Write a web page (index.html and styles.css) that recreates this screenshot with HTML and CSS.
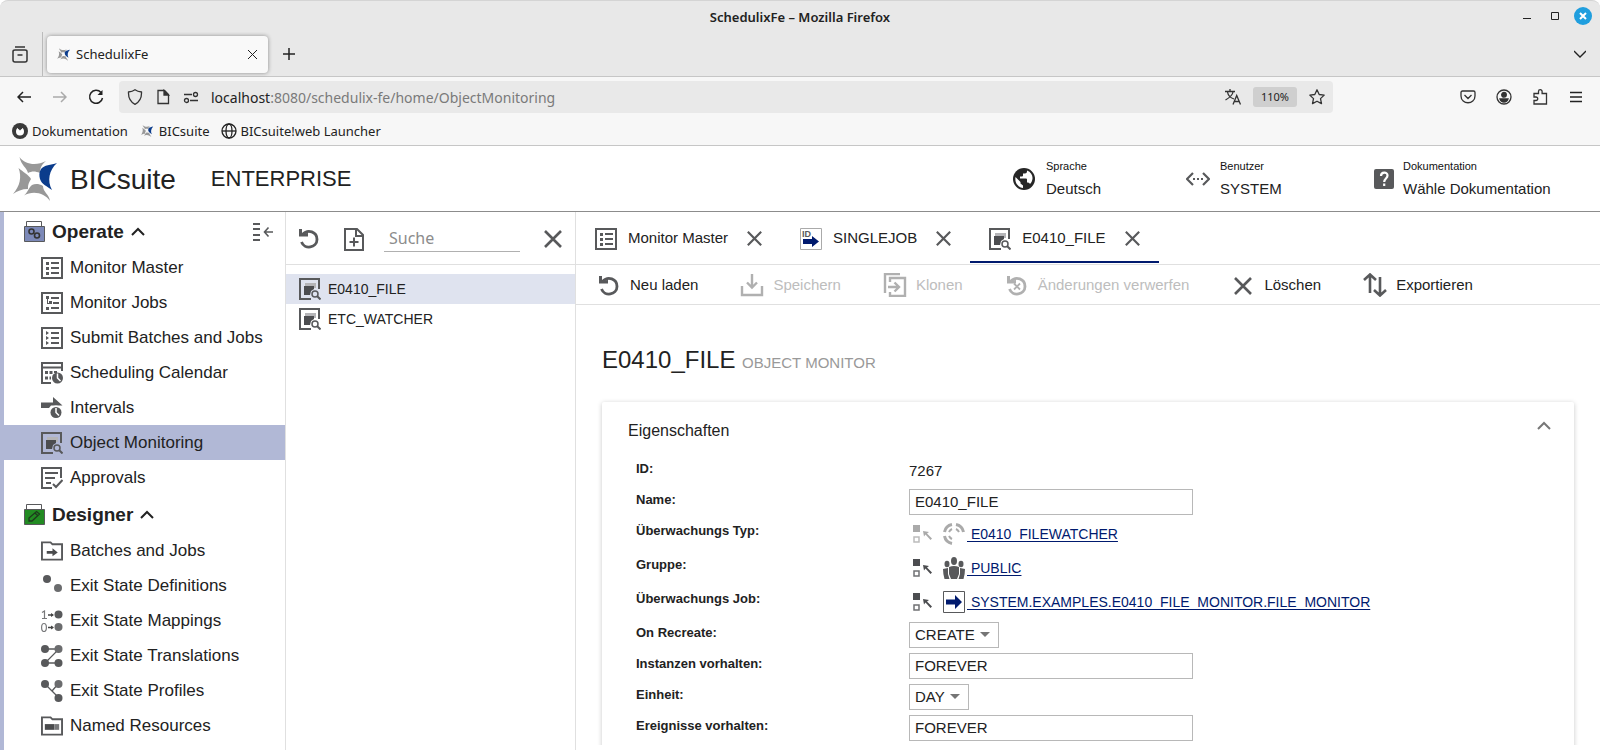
FILE: index.html
```html
<!DOCTYPE html>
<html lang="de">
<head>
  <meta charset="UTF-8" />
  <meta name="viewport" content="width=device-width, initial-scale=1" />
  <title>SchedulixFe</title>
  <link rel="stylesheet" href="styles.css">
</head>
<body>

<!-- shared icons -->
<svg class="defs" aria-hidden="true">
  <symbol id="i-logo" viewBox="0 0 44 44">
    <g fill="#989898">
      <path d="M6.500 0C12 8 24 9 33 4C28 8 27 12 27 16C22 14 19 14 15 16C14 11 8 8 6.500 0z"/>
      <path d="M5.500 11C10 15 16 18 18 22C15 27 15 29 15 32C9 32 4 34 0 37C7 29 9 20 5.500 11z"/>
      <path d="M11 38.500C15 35 16 30 19 28C22 26.500 26 26.500 30 29C30 35 36 37 37 44C32 36 20 33 11 38.500z"/>
    </g>
    <path fill="#0b3c8c" d="M44 6C36 13 34 24 39 33C34 29 29 28 27 22C26 19 26 15 28 12C31 8 38 8 44 6z"/>
  </symbol>
  <symbol id="i-list" viewBox="0 0 22 22">
    <path fill="none" stroke="#58595b" stroke-width="2" d="M1 1h20v20H1z"/>
    <path fill="#58595b" d="M5 5h3v3H5zM5 10h3v3H5zM5 15h3v3H5zM10 5h8v2h-8zM10 10h8v2h-8zM10 15h8v2h-8z"/>
  </symbol>
  <symbol id="i-tree" viewBox="0 0 22 22">
    <path fill="none" stroke="#58595b" stroke-width="2" d="M1 1h20v20H1z"/>
    <path fill="#58595b" d="M5 4h3v3H5zM8 9h3v3H8zM10 5h8v2h-8zM12 10h6v2h-6zM5 15h3v3H5zM10 15h8v2h-8zM6 7h1v4h2v1H6z"/>
  </symbol>
  <symbol id="i-submit" viewBox="0 0 22 22">
    <path fill="none" stroke="#58595b" stroke-width="2" d="M1 1h20v20H1z"/>
    <path fill="#58595b" d="M5 4l3 2-3 2zM5 9l3 2-3 2zM5 14l3 2-3 2zM10 5h8v2h-8zM10 10h8v2h-8zM10 15h8v2h-8z"/>
  </symbol>
  <symbol id="i-calendar" viewBox="0 0 22 22">
    <path fill="none" stroke="#58595b" stroke-width="2" d="M21 9V1H1v20h9"/>
    <path fill="#58595b" d="M2 4.500h18v2H2zM4 9h3v3H4zM8.500 9h3v3h-3zM13 9h3v2h-3zM4 14.500h3v3H4zM8.500 14.500h1.500v3H8.500z"/>
    <circle cx="16.500" cy="16" r="5.500" fill="#58595b"/>
    <path fill="none" stroke="#fff" stroke-width="1.500" d="M16.500 11.500V16l3 3"/>
  </symbol>
  <symbol id="i-interval" viewBox="0 0 22 22">
    <path fill="#58595b" d="M0 5.500h12V0l9.500 8.500H10L8 11H0z"/>
    <circle cx="15" cy="15.500" r="7" fill="#fff"/>
    <circle cx="15" cy="15.500" r="5.500" fill="#58595b"/>
    <path fill="none" stroke="#fff" stroke-width="1.500" d="M15 11v4.500l3 3"/>
  </symbol>
  <symbol id="i-monitor" viewBox="0 0 22 22">
    <path fill="none" stroke="#58595b" stroke-width="2" d="M20 11V1H1v20h11"/>
    <path fill="#b5b5b8" d="M6 5h11v5h-3V8H6z"/>
    <path fill="#4c4d50" d="M5 8h10v3l-3 2-1 4H5z"/>
    <circle cx="16" cy="16" r="3" fill="none" stroke="#58595b" stroke-width="1.500"/>
    <path stroke="#58595b" stroke-width="2" d="M18 18l3.500 3.500"/>
  </symbol>
  <symbol id="i-approve" viewBox="0 0 22 22">
    <path fill="none" stroke="#58595b" stroke-width="2" d="M20 11V1H1v20h10"/>
    <path fill="#58595b" d="M4 5h13v2H4zM4 10h10v2H4zM5 15h5v2H5z"/>
    <path fill="none" stroke="#58595b" stroke-width="2" d="M12 17l3 3 6.500-7"/>
  </symbol>
  <symbol id="i-folder-arrow" viewBox="0 0 23 20">
    <path fill="none" stroke="#58595b" stroke-width="2" d="M1 19V1h9l2 2h10v16z"/>
    <path fill="#4a4b4d" d="M6 10h6V7l5.500 4.500L12 15.500V13H6z"/>
  </symbol>
  <symbol id="i-folder-box" viewBox="0 0 23 20">
    <path fill="none" stroke="#58595b" stroke-width="2" d="M1 19V1h9l2 2h10v16z"/>
    <path fill="#4a4b4d" d="M4 8h10v6H4z"/>
    <path fill="#77787a" d="M14 8h5v6h-5z"/>
  </symbol>
  <symbol id="i-def" viewBox="0 0 22 22">
    <circle cx="6" cy="4" r="4" fill="#58595b"/>
    <circle cx="17" cy="13" r="4" fill="#6b6c6e"/>
  </symbol>
  <symbol id="i-map" viewBox="0 0 22 22">
    <path fill="none" stroke="#77787a" stroke-width="1.200" d="M1 2.500L3.500 1v7.500M1 8.500h5"/>
    <ellipse cx="3" cy="17.500" rx="2.400" ry="4" fill="none" stroke="#77787a" stroke-width="1.200"/>
    <path stroke="#444" stroke-width="1.500" d="M7 5h5M7 17.500h5"/>
    <path fill="#444" d="M10 3l3 2-3 2zM10 15.500l3 2-3 2z"/>
    <circle cx="17.500" cy="4.500" r="4" fill="#58595b"/>
    <circle cx="17.500" cy="17" r="4" fill="#6b6c6e"/>
  </symbol>
  <symbol id="i-trans" viewBox="0 0 22 22">
    <path fill="none" stroke="#58595b" stroke-width="1.300" d="M4 4h14L4 18h14"/>
    <g fill="#58595b"><circle cx="4" cy="4" r="4"/><circle cx="4" cy="18" r="4"/><circle cx="17.500" cy="18" r="4"/></g>
    <circle cx="17.500" cy="4" r="4" fill="#6b6c6e"/>
  </symbol>
  <symbol id="i-profile" viewBox="0 0 22 22">
    <path fill="none" stroke="#58595b" stroke-width="1.300" d="M4 4l14 14M11 11l6-7"/>
    <g fill="#58595b"><circle cx="4" cy="4" r="4"/><circle cx="17.500" cy="18" r="4"/></g>
    <circle cx="17.500" cy="4" r="4" fill="#6b6c6e"/>
  </symbol>
  <symbol id="i-up" viewBox="0 0 14 14"><path fill="none" stroke="currentColor" stroke-width="2" d="M1 10l6-6 6 6"/></symbol>
  <symbol id="i-x" viewBox="0 0 18 18"><path fill="none" stroke="#58595b" stroke-width="2.600" d="M1 1l16 16M17 1L1 17"/></symbol>
  <symbol id="i-reload" viewBox="0 0 20 20">
    <path fill="none" stroke="currentColor" stroke-width="2.800" d="M3.500 5.500C9 -.5 18 3 18 10.500C18 19 5.500 21 2.500 13"/>
    <path fill="currentColor" d="M0 0h3v4.500l6-.5v3.500H0z"/>
  </symbol>
  <symbol id="i-picker" viewBox="0 0 20 20">
    <path fill="currentColor" d="M0 1h7v7H0zM10 7l6 1-2 1.500 5 5-1.500 1.500-5-5.500-1.500 2z"/>
    <path fill="none" stroke="currentColor" stroke-width="1.500" opacity=".8" d="M1 13h5v5H1z"/>
  </symbol>
</svg>

<div class="titlebar">
  <span class="window-title">SchedulixFe – Mozilla Firefox</span>
  <div class="window-buttons">
    <button aria-label="Minimieren"><svg width="8" height="8"><path d="M0 6.500h8" stroke="#222"/></svg></button>
    <button aria-label="Maximieren"><svg width="8" height="8"><path d="M.5.5h7v7h-7z" fill="none" stroke="#222"/></svg></button>
    <button class="close" aria-label="Fenster schließen"><svg width="8" height="8"><path d="M1 1l6 6M7 1L1 7" stroke="#fff" stroke-width="2"/></svg></button>
  </div>
</div>

<div class="tabstrip">
  <button class="tab-overview" aria-label="Tabs"><svg width="16" height="17" fill="none" stroke="#333" stroke-width="1.500"><path d="M3 1h10M1 5.500q0-1.500 2-1.500h10q2 0 2 1.500V14q0 2-2 2H3q-2 0-2-2zM5.500 9h5"/></svg></button>
  <div class="browser-tab">
    <svg class="favicon"><use href="#i-logo"/></svg>
    <span>SchedulixFe</span>
    <button aria-label="Tab schließen"><svg width="9" height="9"><path d="M0 0l9 9M9 0L0 9" stroke="#222"/></svg></button>
  </div>
  <button class="new-tab" aria-label="Neuer Tab"><svg width="12" height="12"><path d="M6 0v12M0 6h12" stroke="#222" stroke-width="1.500"/></svg></button>
  <button class="tab-list" aria-label="Alle Tabs"><svg width="12" height="8" fill="none"><path d="M0 1l6 6 6-6" stroke="#222" stroke-width="1.300"/></svg></button>
</div>

<div class="navbar">
  <button aria-label="Zurück"><svg width="14" height="12" fill="none" stroke="#222" stroke-width="1.500"><path d="M14 6H1M6 1L1 6l5 5"/></svg></button>
  <button aria-label="Vor"><svg width="14" height="12" fill="none" stroke="#aaa" stroke-width="1.500"><path d="M0 6h13M8 1l5 5-5 5"/></svg></button>
  <button aria-label="Neu laden"><svg width="16" height="16" fill="none" stroke="#222" stroke-width="1.500"><path d="M13 3.500A6.500 6.500 0 1 0 14.500 9"/><path d="M14.500 1v5h-5z" fill="#222" stroke="none"/></svg></button>
  <div class="urlbar">
    <svg class="nav-icon" viewBox="0 0 16 16"><path d="M8 .8c2 1.500 4 2 6.500 2.200C14.800 9 12.500 13 8 15.300C3.500 13 1.200 9 1.500 3C4 2.800 6 2.300 8 .8z"/></svg>
    <svg class="nav-icon" viewBox="0 0 16 16"><path d="M3 1.500h6.500l4 4v9H3z"/><path d="M9 1.500l4.500 4.500H9z" fill="#333"/></svg>
    <svg class="nav-icon" viewBox="0 0 16 16"><path d="M1 5.500h8M7 11.500h8"/><circle cx="12.500" cy="5.500" r="2"/><circle cx="3.500" cy="11.500" r="2"/></svg>
    <span class="url"><b>localhost</b>:8080/schedulix-fe/home/ObjectMonitoring</span>
    <svg class="nav-icon" viewBox="0 0 16 16"><path d="M0 2.500h10M5 0v2.500M2.500 3C3 6 6 9 9 10M8 3C7.500 6 4 9 .5 11M8 15.500L11.700 6.500 15.500 15.500M9.500 12.500h4.500"/></svg>
    <span class="zoom-level">110%</span>
    <svg class="nav-icon" viewBox="0 0 16 16"><path d="M8 .8l2.200 4.700 5 .6-3.700 3.500 1 5L8 12.200 3.500 14.600l1-5L.8 6.100l5-.6z" stroke-linejoin="round"/></svg>
  </div>
  <button aria-label="Pocket"><svg class="nav-icon" viewBox="0 0 16 16"><path d="M2.500 2h11q1.500 0 1.500 1.500V7c0 9-14 9-14 0V3.500Q1 2 2.500 2zM4.500 6L8 9.500 11.500 6"/></svg></button>
  <button aria-label="Konto"><svg class="nav-icon" viewBox="0 0 16 16"><circle cx="8" cy="8" r="7"/><circle cx="8" cy="5.800" r="2.300" fill="#333"/><path d="M4 10h8q-1 3-4 3t-4-3z" fill="#333"/></svg></button>
  <button aria-label="Erweiterungen"><svg class="nav-icon" viewBox="0 0 16 16"><path d="M2 8V4.500h4.500V2.500a1.800 1.800 0 0 1 3.600 0v2h4.400V15H2v-3.500h2a1.700 1.700 0 0 0 0-3.500z"/></svg></button>
  <button aria-label="Menü"><svg width="12" height="12"><path d="M0 1.500h12M0 6h12M0 10.500h12" stroke="#222" stroke-width="1.500"/></svg></button>
</div>

<div class="bookmarks">
  <a href="#"><svg viewBox="0 0 16 16"><circle cx="8" cy="8" r="8" fill="#3a3a3a"/><circle cx="8" cy="8.500" r="4" fill="#fff"/><path d="M6 4h4v1.500L8 7.500 6 5.500z" fill="#3a3a3a"/></svg>Dokumentation</a>
  <a href="#"><svg viewBox="-6 -6 56 56"><use href="#i-logo" width="44" height="44"/></svg>BICsuite</a>
  <a href="#"><svg viewBox="0 0 16 16" fill="none" stroke="#222" stroke-width="1.300"><circle cx="8" cy="8" r="7"/><ellipse cx="8" cy="8" rx="3" ry="7"/><path d="M1 8h14"/></svg>BICsuite!web Launcher</a>
</div>

<header class="app-header">
  <svg class="logo"><use href="#i-logo"/></svg>
  <span class="brand">BICsuite</span>
  <span class="edition">ENTERPRISE</span>
  <div class="header-info language">
    <svg width="24" height="24" viewBox="0 0 24 24"><circle cx="12" cy="12" r="11" fill="#262626"/><path fill="#fff" d="M3.500 10l5 5v1.500l2.500 2V21C6 20.500 2.500 15.500 3.500 10zM15 3.500v1q0 2-2 2h-2v2q0 1-1 1H8v2h6q1 0 1 1v3h1q1.500 0 2 1.500C22 13 21.500 6 15 3.500z"/></svg>
    <div><small>Sprache</small><span>Deutsch</span></div>
  </div>
  <div class="header-info user">
    <svg width="24" height="24" viewBox="0 0 24 24"><path fill="none" stroke="#58595b" stroke-width="2.200" d="M7 6l-6 6 6 6M17 6l6 6-6 6"/><path fill="#58595b" d="M7 11h2v2H7zM11 11h2v2h-2zM15 11h2v2h-2z"/></svg>
    <div><small>Benutzer</small><span>SYSTEM</span></div>
  </div>
  <div class="header-info docs">
    <svg width="24" height="24" viewBox="0 0 24 24"><rect x="2" y="2" width="20" height="20" rx="2" fill="#58595b"/><path fill="none" stroke="#fff" stroke-width="2.200" d="M9 9C9 4.500 15.500 4.500 15.500 8.500C15.500 11.500 12.200 11.500 12.200 15M12.200 16.500v2.500"/></svg>
    <div><small>Dokumentation</small><span>Wähle Dokumentation</span></div>
  </div>
</header>

<div class="app">
  <nav class="sidebar">
    <div class="nav-head">
      <svg width="21" height="22" viewBox="0 0 21 22"><path fill="#fff" stroke="#58595b" d="M2.500.5h15v5h-15z"/><path fill="#7c89b8" stroke="#58595b" d="M.5 5.500h20v15H.5z"/><g fill="none" stroke="#333" stroke-width="1.600"><circle cx="7.500" cy="10.500" r="2.500"/><circle cx="13" cy="14.500" r="2.500"/></g></svg>
      <span>Operate</span><svg class="chev"><use href="#i-up"/></svg>
      <button class="collapse" aria-label="Menü einklappen"><svg width="20" height="20" fill="none" stroke="#58595b" stroke-width="2"><path d="M0 2h7M0 7h7M0 13h7M0 18h7"/><path d="M20 10h-8M15.500 5.500L11.500 10l4 4.500" stroke-width="1.600"/></svg></button>
    </div>
    <a href="#"><svg><use href="#i-list"/></svg>Monitor Master</a>
    <a href="#"><svg><use href="#i-tree"/></svg>Monitor Jobs</a>
    <a href="#"><svg><use href="#i-submit"/></svg>Submit Batches and Jobs</a>
    <a href="#"><svg><use href="#i-calendar"/></svg>Scheduling Calendar</a>
    <a href="#"><svg><use href="#i-interval"/></svg>Intervals</a>
    <a href="#" class="active"><svg><use href="#i-monitor"/></svg>Object Monitoring</a>
    <a href="#"><svg><use href="#i-approve"/></svg>Approvals</a>
    <div class="nav-head">
      <svg width="21" height="22" viewBox="0 0 21 22"><path fill="#fff" stroke="#58595b" d="M2.500.5h15v5h-15z"/><path fill="#228b22" stroke="#58595b" d="M.5 5.500h20v15H.5z"/><path fill="none" stroke="#1d3a1d" stroke-width="1.300" d="M5 17v-3l7.500-6.500 3 2.500L8 17zM11 9l3 3"/></svg>
      <span>Designer</span><svg class="chev"><use href="#i-up"/></svg>
    </div>
    <a href="#"><svg><use href="#i-folder-arrow"/></svg>Batches and Jobs</a>
    <a href="#"><svg><use href="#i-def"/></svg>Exit State Definitions</a>
    <a href="#"><svg><use href="#i-map"/></svg>Exit State Mappings</a>
    <a href="#"><svg><use href="#i-trans"/></svg>Exit State Translations</a>
    <a href="#"><svg><use href="#i-profile"/></svg>Exit State Profiles</a>
    <a href="#"><svg><use href="#i-folder-box"/></svg>Named Resources</a>
  </nav>

  <section class="list-pane">
    <div class="list-tools">
      <button aria-label="Neu laden"><svg width="20" height="20"><use href="#i-reload"/></svg></button>
      <button aria-label="Neu"><svg width="20" height="23" fill="none" stroke="#58595b" stroke-width="2"><path d="M1 1h12l6 6v15H1zM12 1v7h7M10 9.500v9M5.500 14h9"/></svg></button>
      <input type="text" placeholder="Suche" aria-label="Suche">
      <button aria-label="Suche löschen"><svg width="18" height="18"><use href="#i-x"/></svg></button>
    </div>
    <div class="list">
      <a href="#" class="active"><svg><use href="#i-monitor"/></svg>E0410_FILE</a>
      <a href="#"><svg><use href="#i-monitor"/></svg>ETC_WATCHER</a>
    </div>
  </section>

  <main>
    <div class="tabs">
      <div class="tab">
        <svg class="tab-icon"><use href="#i-list"/></svg><a href="#">Monitor Master</a>
        <button aria-label="Schließen"><svg><use href="#i-x"/></svg></button>
      </div>
      <div class="tab">
        <svg class="tab-icon" viewBox="0 0 22 22"><path fill="#fff" stroke="#aaa" d="M.5.5h21v21H.5z"/><text class="id-text" x="2" y="9">ID</text><path fill="#001a6e" d="M3 11h9V8l7 5.500L12 19v-3H3z"/></svg><a href="#">SINGLEJOB</a>
        <button aria-label="Schließen"><svg><use href="#i-x"/></svg></button>
      </div>
      <div class="tab active">
        <svg class="tab-icon"><use href="#i-monitor"/></svg><a href="#">E0410_FILE</a>
        <button aria-label="Schließen"><svg><use href="#i-x"/></svg></button>
      </div>
    </div>

    <div class="actions">
      <button><svg viewBox="-2 -3 24 24"><use href="#i-reload" width="20" height="20"/></svg>Neu laden</button>
      <button disabled><svg viewBox="0 0 24 24" fill="none" stroke="currentColor" stroke-width="2.400"><path d="M2 13v9h20v-9M12 1v13M7 9.500l5 5 5-5"/></svg>Speichern</button>
      <button disabled><svg viewBox="0 0 24 24" fill="none" stroke="currentColor" stroke-width="2.400"><path d="M2 20V1h15M7 9V5h15v18H7v-4M5 14h10M11.500 9.500L16 14l-4.500 4.500"/></svg>Klonen</button>
      <button disabled><svg viewBox="-2 -3 24 24"><use href="#i-reload" width="20" height="20"/><path d="M7 7.500l6 6M13 7.500l-6 6" stroke="currentColor" stroke-width="1.800"/></svg>Änderungen verwerfen</button>
      <button><svg viewBox="-3 -4 24 24"><use href="#i-x" width="18" height="18"/></svg>Löschen</button>
      <button><svg viewBox="0 0 24 24" fill="none" stroke="#58595b" stroke-width="2.600"><path d="M7 20V2M1 7l6-5.500L13 7M17 4v18M11 17l6 5.500 6-5.500"/></svg>Exportieren</button>
    </div>

    <div class="content">
      <h1>E0410_FILE <small>OBJECT MONITOR</small></h1>
      <div class="panel">
        <div class="panel-head">
          <h2>Eigenschaften</h2>
          <button aria-label="Einklappen"><svg width="14" height="14"><use href="#i-up"/></svg></button>
        </div>
        <form class="props">
          <div class="row"><span class="label">ID:</span><span>7267</span></div>
          <div class="row"><label for="name">Name:</label><input type="text" id="name" value="E0410_FILE"></div>
          <div class="row link-row">
            <span class="label">Überwachungs Typ:</span>
            <div class="ref">
              <svg class="picker off"><use href="#i-picker"/></svg>
              <svg class="type" viewBox="0 0 22 22"><g fill="none" stroke="#aaa" stroke-width="3"><path d="M1.500 9A9.500 9.500 0 0 1 9 1.500M13 1.500A9.500 9.500 0 0 1 20.500 9M1.500 13A9.500 9.500 0 0 0 9 20.500"/><path d="M6 9q1-2 3-3M13 6q2 1 3 3M6 13q1 2 3 3" stroke-width="2"/></g></svg>
              <a href="#">&nbsp;E0410_FILEWATCHER</a>
            </div>
          </div>
          <div class="row link-row">
            <span class="label">Gruppe:</span>
            <div class="ref">
              <svg class="picker"><use href="#i-picker"/></svg>
              <svg class="type" viewBox="0 0 22 22" fill="#58595b"><ellipse cx="11" cy="4" rx="3" ry="4"/><ellipse cx="4" cy="7" rx="2.500" ry="3.200"/><ellipse cx="18" cy="7" rx="2.500" ry="3.200"/><path d="M6 10q5-2 10 0v7l-2 5H8l-2-5zM0 12l5-1v6l1.500 5H1.500Q0 17 0 12zM22 12l-5-1v6l-1.500 5h5Q22 17 22 12z"/></svg>
              <a href="#">&nbsp;PUBLIC</a>
            </div>
          </div>
          <div class="row link-row">
            <span class="label">Überwachungs Job:</span>
            <div class="ref">
              <svg class="picker"><use href="#i-picker"/></svg>
              <svg class="type" viewBox="0 0 22 22"><path fill="#fff" stroke="#58595b" d="M.5.5h21v21H.5z"/><path fill="#001a6e" d="M3 8.500h9V4l7 7-7 7v-4.500H3z"/></svg>
              <a href="#">&nbsp;SYSTEM.EXAMPLES.E0410_FILE_MONITOR.FILE_MONITOR</a>
            </div>
          </div>
          <div class="row"><label for="recreate">On Recreate:</label><div class="select"><select id="recreate"><option>CREATE</option></select></div></div>
          <div class="row"><label for="instances">Instanzen vorhalten:</label><input type="text" id="instances" value="FOREVER"></div>
          <div class="row"><label for="unit">Einheit:</label><div class="select"><select id="unit"><option>DAY</option></select></div></div>
          <div class="row"><label for="events">Ereignisse vorhalten:</label><input type="text" id="events" value="FOREVER"></div>
        </form>
      </div>
    </div>
  </main>
</div>

</body>
</html>
```
FILE: styles.css
```css
* {
  box-sizing: border-box;
}
body {
  margin: 0;
  height: 100vh;
  display: flex;
  flex-direction: column;
  overflow: hidden;
  background-color: #fff;
  color: #222;
  font-family: "Liberation Sans", Arial, sans-serif;
  font-size: 15px;
}
svg {
  flex: none;
}
a {
  color: inherit;
  text-decoration: none;
}
button {
  display: flex;
  align-items: center;
  justify-content: center;
  padding: 0;
  border: 0;
  background: none;
  color: inherit;
  font: inherit;
  cursor: pointer;
}
.defs {
  display: none;
}

/* browser window */
.titlebar, .tabstrip, .navbar, .bookmarks {
  display: flex;
  align-items: center;
  flex: none;
  font-family: "Noto Sans", sans-serif;
  font-size: 13px;
}
.titlebar {
  position: relative;
  justify-content: center;
  height: 32px;
  background-color: #e8e8e8;
  border-top: 1px solid #d4d4d4;
  border-radius: 8px 8px 0 0;
}
.window-title {
  font-weight: 600;
  line-height: 16px;
}
.window-buttons {
  position: absolute;
  right: 8px;
  top: 6px;
  display: flex;
  align-items: center;
  gap: 10px;
}
.window-buttons button {
  width: 18px;
  height: 18px;
}
.window-buttons .close {
  background-color: #1f9ede;
  border-radius: 50%;
}
.tabstrip {
  height: 45px;
  background-color: #e8e8e8;
  border-bottom: 1px solid #c6c6c6;
}
.tab-overview {
  width: 43px;
  height: 44px;
  padding-right: 3px;
  border-right: 1px solid #bbb;
}
.browser-tab {
  display: flex;
  align-items: center;
  gap: 6px;
  width: 221px;
  height: 37px;
  margin: 0 15px 0 4px;
  padding: 0 11px 0 10px;
  background-color: #f9f9f9;
  border-radius: 4px;
  box-shadow: 0 0 4px rgba(0, 0, 0, 0.4);
}
.favicon {
  width: 13px;
  height: 13px;
}
.browser-tab button {
  margin-left: auto;
}
.tab-list {
  margin: 0 14px 0 auto;
}
.navbar {
  height: 40px;
  padding: 0 6px;
  background-color: #f7f7f7;
}
.navbar button {
  width: 36px;
  height: 32px;
}
.nav-icon {
  width: 16px;
  height: 16px;
  fill: none;
  stroke: #333;
  stroke-width: 1.3;
}
.urlbar {
  display: flex;
  align-items: center;
  gap: 12px;
  flex: 1;
  height: 32px;
  margin: 0 117px 0 5px;
  padding: 0 8px;
  background-color: #e9e9e9;
  border-radius: 4px;
}
.url {
  flex: 1;
  color: #7a7a7a;
  font-size: 14px;
}
.url b {
  color: #222;
  font-weight: normal;
}
.zoom-level {
  padding: 2px 8px;
  background-color: #cfcfcf;
  border-radius: 3px;
  font-size: 11px;
  line-height: 16px;
}
.bookmarks {
  gap: 11px;
  height: 29px;
  padding: 0 12px;
  background-color: #f7f7f7;
  border-bottom: 1px solid #c6c6c6;
}
.bookmarks a {
  display: flex;
  align-items: center;
  gap: 4px;
}
.bookmarks svg {
  width: 16px;
  height: 16px;
}

/* application header */
.app-header {
  display: flex;
  align-items: center;
  flex: none;
  height: 66px;
  padding: 0 48px 0 13px;
  border-bottom: 1px solid #8c8c8c;
}
.logo {
  width: 44px;
  height: 44px;
}
.brand {
  margin: 0 35px 0 13px;
  padding-top: 2px;
  font-size: 28px;
}
.edition {
  font-size: 22px;
}
.header-info {
  display: flex;
  align-items: center;
  gap: 10px;
}
.header-info div {
  display: flex;
  flex-direction: column;
  gap: 7px;
}
.header-info small {
  color: #111;
  font-size: 11px;
  line-height: 13px;
}
.header-info span {
  line-height: 18px;
}
.language {
  width: 174px;
  margin-left: auto;
}
.user {
  width: 186px;
}
.docs {
  gap: 7px;
  width: 180px;
}

/* layout */
.app {
  display: flex;
  flex: 1;
  min-height: 0;
}
.sidebar {
  flex: none;
  width: 286px;
  overflow: hidden;
  border-left: 4px solid #b1b8d6;
  border-right: 1px solid #e0e0e0;
}
.sidebar a {
  display: flex;
  align-items: center;
  height: 35px;
  padding-left: 37px;
  font-size: 17px;
}
.sidebar a svg {
  width: 22px;
  height: 22px;
  margin-right: 7px;
}
.sidebar a.active {
  background-color: #b1b8d6;
}
.nav-head {
  display: flex;
  align-items: center;
  height: 38px;
  padding: 1px 12px 0 20px;
  font-size: 19px;
  font-weight: bold;
}
.nav-head span {
  margin-left: 7px;
}
.chev {
  width: 14px;
  height: 14px;
  margin-left: 7px;
}
.collapse {
  margin-left: auto;
}
.list-pane {
  flex: none;
  width: 290px;
  border-right: 1px solid #e0e0e0;
}
.list-tools {
  display: flex;
  align-items: center;
  height: 53px;
  padding: 2px 13px 0;
  border-bottom: 1px solid #e0e0e0;
  color: #58595b;
}
.list-tools input {
  width: 136px;
  height: 28px;
  margin: 0 24px 2px 20px;
  padding: 0 5px;
  border: 0;
  border-bottom: 1px solid #b0b0b0;
  font-family: "Noto Sans", sans-serif;
  font-size: 16px;
}
.list-tools input::placeholder {
  color: #8c8c8c;
}
.list-tools button + button {
  margin-left: 25px;
}
.list {
  padding-top: 9px;
}
.list a {
  display: flex;
  align-items: center;
  gap: 7px;
  height: 30px;
  padding-left: 13px;
  font-size: 14px;
}
.list a svg {
  width: 22px;
  height: 22px;
}
.list a.active {
  background-color: #dfe3ef;
}

/* main area */
main {
  display: flex;
  flex-direction: column;
  flex: 1;
  min-width: 0;
  padding-bottom: 5px;
}
.tabs {
  display: flex;
  flex: none;
  height: 53px;
  border-bottom: 1px solid #e0e0e0;
}
.tab {
  display: flex;
  align-items: center;
  height: 51px;
  padding: 4px 19px 0;
  border-bottom: 2px solid transparent;
}
.tab.active {
  border-color: #001a6e;
}
.tab-icon {
  width: 22px;
  height: 22px;
  margin-right: 11px;
}
.id-text {
  fill: #58595b;
  font-size: 9px;
  font-weight: bold;
}
.tab a {
  margin-right: 19px;
  padding-bottom: 3px;
}
.tab button svg {
  width: 15px;
  height: 15px;
}
.actions {
  display: flex;
  align-items: center;
  flex: none;
  gap: 42px;
  height: 40px;
  padding-left: 21px;
  border-bottom: 1px solid #e0e0e0;
}
.actions button {
  gap: 9px;
}
.actions button svg {
  width: 24px;
  height: 24px;
  color: #58595b;
}
.actions button:disabled {
  color: #bdbdbd;
}
.actions button:disabled svg {
  color: #b0b0b0;
}
.content {
  flex: 1;
  min-height: 0;
  padding: 41px 26px 0;
  overflow: hidden;
}
h1, h2 {
  margin: 0;
  font-weight: normal;
}
h1 {
  font-size: 24px;
  line-height: 28px;
}
h1 small {
  color: #999;
  font-size: 15px;
}
.panel {
  min-height: 400px;
  margin-top: 25px;
  border-radius: 2px;
  box-shadow: 0 1px 5px rgba(0, 0, 0, 0.22);
}
.panel-head {
  display: flex;
  justify-content: space-between;
  height: 53px;
  padding: 17px 23px 0 26px;
}
.panel-head h2 {
  font-size: 16px;
  line-height: 24px;
}
.panel-head button {
  width: 14px;
  height: 14px;
  color: #777;
}
.row {
  display: grid;
  grid-template-columns: 273px 1fr;
  align-items: center;
  height: 31px;
  padding-left: 34px;
}
.link-row {
  height: 34px;
}
.row label, .row .label {
  align-self: start;
  padding-top: 6px;
  font-size: 13px;
  font-weight: bold;
  line-height: 15px;
}
.row input, .row select {
  height: 26px;
  margin: 0;
  padding: 0 5px;
  border: 1px solid #b8b8b8;
  border-radius: 0;
  background-color: #fff;
  color: #222;
  font: inherit;
}
.row input {
  width: 284px;
}
.select {
  position: relative;
  justify-self: start;
}
.row select {
  display: block;
  padding-right: 23px;
  appearance: none;
}
.select::after {
  content: "";
  position: absolute;
  top: 10px;
  right: 9px;
  border: 5px solid transparent;
  border-top-color: #757575;
  border-bottom: 0;
  pointer-events: none;
}
.ref {
  display: flex;
  align-items: center;
  font-size: 14px;
}
.ref a {
  margin-left: 2px;
  color: #001a6e;
  text-decoration: underline;
  text-underline-offset: 2px;
}
.picker {
  width: 20px;
  height: 20px;
  margin: 0 10px 0 4px;
  color: #4c4d50;
}
.picker.off {
  color: #aaa;
}
.type {
  width: 22px;
  height: 22px;
}
```
